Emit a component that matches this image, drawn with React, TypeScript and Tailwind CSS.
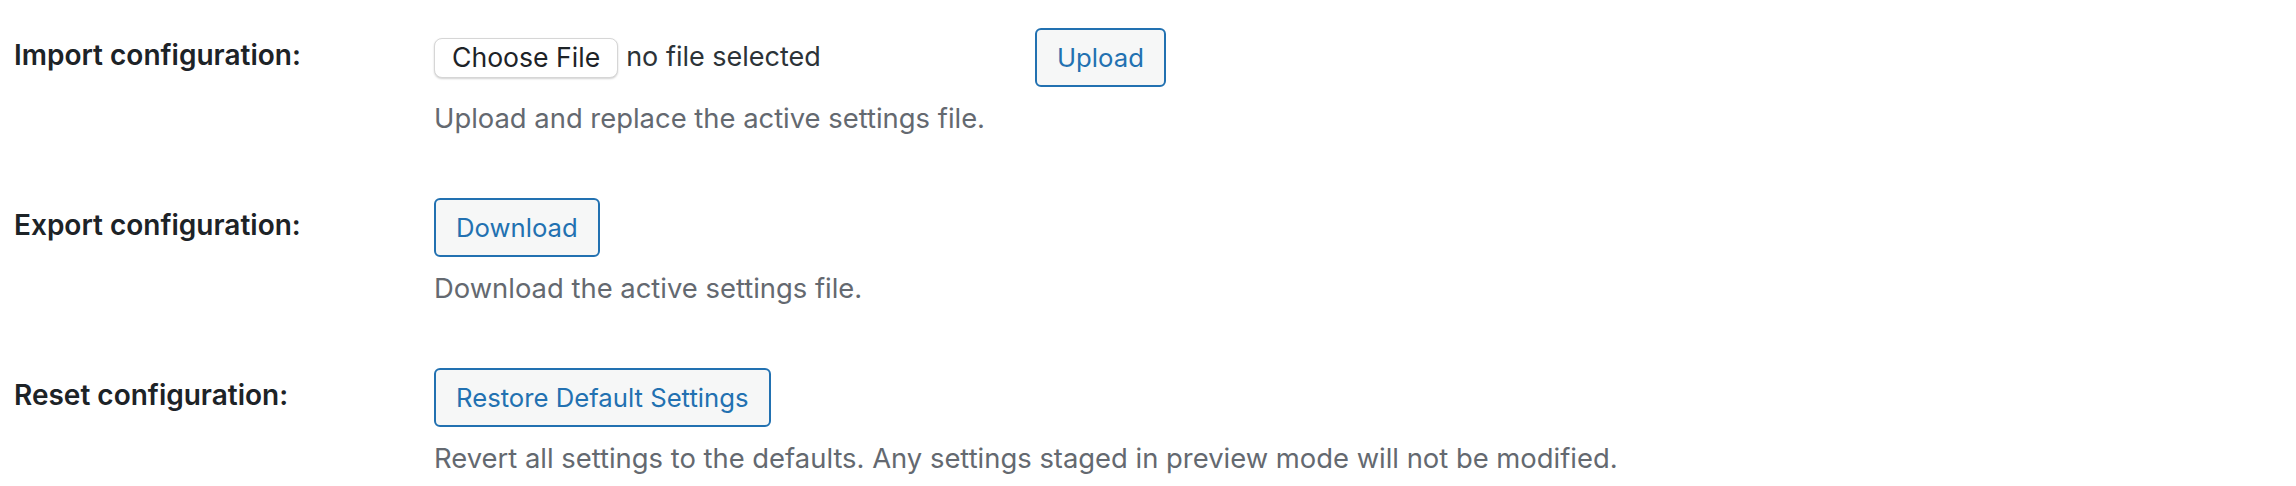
import type { ReactNode } from 'react';

type RowProps = {
  label: string;
  description: string;
  children: ReactNode;
};

function Row({ label, description, children }: RowProps) {
  return (
    <div className="flex pt-[28px] pb-[34px] pl-[14px]">
      <div className="w-[420px] shrink-0 pt-[9px] text-[28px] leading-[36px] font-semibold text-[#1d2327]">{label}</div>
      <div className="flex flex-col">
        {children}
        <p className="mt-[13px] text-[27.4px] leading-[36px] text-[#646970]">{description}</p>
      </div>
    </div>
  );
}

function WpButton({ children }: { children: ReactNode }) {
  return (
    <button
      type="button"
      className="h-[59px] rounded-[6px] border-2 border-[#2271b1] bg-[#f6f7f7] px-[20px] text-[25.7px] leading-none text-[#2271b1]"
    >
      {children}
    </button>
  );
}

export default function App() {
  return (
    <div className="min-h-[486px] w-full bg-white font-['Inter','Noto_Sans',sans-serif]">
      <Row label="Import configuration:" description="Upload and replace the active settings file.">
        <div className="flex h-[59px] items-center">
          <div className="flex w-[601px] items-center">
            <span className="flex h-[40px] items-center rounded-[8px] border border-[#d6d6d6] bg-white px-[17px] text-[26.6px] text-[#1d2327] shadow-[0_1px_2px_rgba(0,0,0,0.18)]">
              Choose File
            </span>
            <span className="ml-[8px] text-[27px] text-[#2c3338]">no file selected</span>
          </div>
          <WpButton>Upload</WpButton>
        </div>
      </Row>
      <Row label="Export configuration:" description="Download the active settings file.">
        <div className="flex">
          <WpButton>Download</WpButton>
        </div>
      </Row>
      <Row
        label="Reset configuration:"
        description="Revert all settings to the defaults. Any settings staged in preview mode will not be modified."
      >
        <div className="flex">
          <WpButton>Restore Default Settings</WpButton>
        </div>
      </Row>
    </div>
  );
}
